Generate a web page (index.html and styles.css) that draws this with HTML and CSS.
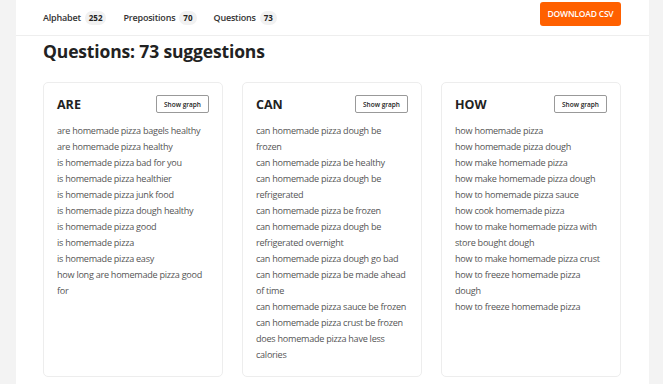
FILE: index.html
```html
<!DOCTYPE html>
<html>
<head>
<meta charset="utf-8">
<link rel="stylesheet" href="styles.css">
</head>
<body>
<div class="page">
  <header class="topbar">
    <nav class="tabs">
      <span class="tab">Alphabet <span class="badge">252</span></span>
      <span class="tab">Prepositions <span class="badge">70</span></span>
      <span class="tab">Questions <span class="badge">73</span></span>
    </nav>
    <button class="download">DOWNLOAD CSV</button>
  </header>
  <main class="content">
    <h1 class="title">Questions: 73 suggestions</h1>
    <div class="cards">
      <section class="card">
        <div class="card-head">
          <h2>ARE</h2>
          <button class="graph">Show graph</button>
        </div>
        <ul class="list">
          <li>are homemade pizza bagels healthy</li>
          <li>are homemade pizza healthy</li>
          <li>is homemade pizza bad for you</li>
          <li>is homemade pizza healthier</li>
          <li>is homemade pizza junk food</li>
          <li>is homemade pizza dough healthy</li>
          <li>is homemade pizza good</li>
          <li>is homemade pizza</li>
          <li>is homemade pizza easy</li>
          <li>how long are homemade pizza good for</li>
        </ul>
      </section>
      <section class="card">
        <div class="card-head">
          <h2>CAN</h2>
          <button class="graph">Show graph</button>
        </div>
        <ul class="list">
          <li>can homemade pizza dough be frozen</li>
          <li>can homemade pizza be healthy</li>
          <li>can homemade pizza dough be refrigerated</li>
          <li>can homemade pizza be frozen</li>
          <li>can homemade pizza dough be refrigerated overnight</li>
          <li>can homemade pizza dough go bad</li>
          <li>can homemade pizza be made ahead of time</li>
          <li>can homemade pizza sauce be frozen</li>
          <li>can homemade pizza crust be frozen</li>
          <li>does homemade pizza have less calories</li>
        </ul>
      </section>
      <section class="card">
        <div class="card-head">
          <h2>HOW</h2>
          <button class="graph">Show graph</button>
        </div>
        <ul class="list">
          <li>how homemade pizza</li>
          <li>how homemade pizza dough</li>
          <li>how make homemade pizza</li>
          <li>how make homemade pizza dough</li>
          <li>how to homemade pizza sauce</li>
          <li>how cook homemade pizza</li>
          <li>how to make homemade pizza with store bought dough</li>
          <li>how to make homemade pizza crust</li>
          <li>how to freeze homemade pizza dough</li>
          <li>how to freeze homemade pizza</li>
        </ul>
      </section>
    </div>
  </main>
</div>
</body>
</html>
```
FILE: styles.css
```css
html, body {
  margin: 0;
  padding: 0;
}
body {
  background: #f3f3f3;
  font-family: "Open Sans", "Noto Sans", sans-serif;
  color: #222;
}
.page {
  margin-left: 16px;
  width: 633px;
  height: 384px;
  background: #fff;
}
.topbar {
  height: 35px;
  border-bottom: 1px solid #eeeeee;
  display: flex;
  align-items: center;
  justify-content: space-between;
  padding: 0 28px 0 27px;
  box-sizing: content-box;
}
.tabs {
  display: flex;
  align-items: center;
  gap: 17px;
}
.tab {
  font-size: 9px;
  font-weight: 600;
  letter-spacing: -0.2px;
  color: #333;
  display: flex;
  align-items: center;
  gap: 4px;
}
.badge {
  display: inline-block;
  background: #f1f1f1;
  border-radius: 8px;
  font-size: 8px;
  font-weight: 700;
  letter-spacing: 0;
  padding: 1px 4px;
  line-height: 12px;
  min-width: 8px;
  text-align: center;
  color: #222;
}
.download {
  background: #ff6000;
  color: #fff;
  border: none;
  border-radius: 3px;
  font-family: inherit;
  font-size: 8.5px;
  font-weight: 600;
  letter-spacing: -0.2px;
  width: 81px;
  height: 24px;
  padding: 0;
  margin-top: -8px;
}
.content {
  padding: 0 28px 0 27px;
}
.title {
  margin: 3px 0 0 0;
  font-size: 17.5px;
  line-height: 24px;
  font-weight: 700;
  letter-spacing: -0.15px;
  color: #222;
}
.cards {
  margin-top: 19px;
  display: grid;
  grid-template-columns: repeat(3, 180px);
  gap: 19px;
}
.card {
  border: 1px solid #ededed;
  border-radius: 5px;
  padding: 12px 14px 13px 13px;
}
.card-head {
  display: flex;
  align-items: center;
  justify-content: space-between;
  height: 18px;
  margin-right: -1px;
}
.card-head h2 {
  margin: 0;
  font-size: 12.5px;
  font-weight: 700;
  color: #222;
}
.graph {
  width: 53px;
  height: 18px;
  padding: 0;
  background: #fff;
  border: 1px solid #999;
  border-radius: 2px;
  font-family: inherit;
  font-size: 6.5px;
  font-weight: 600;
  color: #222;
}
.list {
  list-style: none;
  margin: 10px 0 0 0;
  padding: 0;
}
.list li {
  font-size: 9.1px;
  letter-spacing: -0.27px;
  line-height: 16px;
  color: #555;
}
```
